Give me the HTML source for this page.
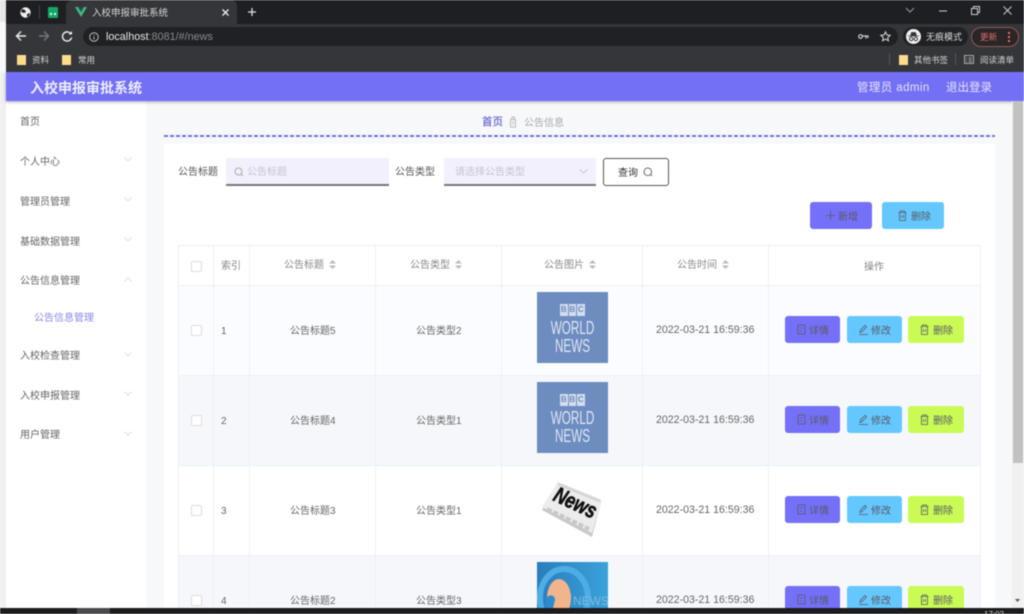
<!DOCTYPE html>
<html lang="zh"><head><meta charset="utf-8"><title>入校申报审批系统</title>
<style>
html,body{margin:0;padding:0;width:1024px;height:614px;overflow:hidden;background:#fff}
#p{position:absolute;left:0;top:0;width:1024px;height:614px;overflow:hidden;font-family:"Liberation Sans","Noto Sans CJK SC",sans-serif;filter:blur(.4px);background:#fff}
.a{position:absolute}
.t{position:absolute;white-space:nowrap;line-height:14px;font-size:10px;color:#666;margin-top:1px}
.z{margin-top:0}
.b{position:absolute;height:27px;border-radius:3px;font-size:10px;line-height:27px;color:#5a5a66;white-space:nowrap}
.b svg{position:absolute;top:8px;width:11px;height:11px;fill:none;stroke:#5a5a66;stroke-width:.8}
.b span{position:absolute;top:2px}
.p{background:#7470f8}.s{background:#64c8fe}.g{background:#c9fb54}
.l{position:absolute;background:#edf0f5}
svg{position:absolute;overflow:visible}
.w{position:absolute;left:0;width:71px;text-align:center;font-size:18px;line-height:18px;color:#dfe6f3;transform:scaleX(.65);white-space:nowrap}
.q{position:absolute;top:12px;width:7.500px;height:12px;background:#d5deee;color:#6d8cc0;font-size:8px;line-height:12px;font-weight:bold;text-align:center}
</style></head><body><div id="p">

<!-- desktop edge -->
<div class="a" style="left:0;top:0;width:6px;height:22px;background:#e6e6e6"></div>
<div class="a" style="left:0;top:22px;width:6px;height:50px;background:#f8f8f8"></div>
<div class="a" style="left:6px;top:0;right:0;height:24px;background:#1e1f23"></div>
<div class="a" style="left:66px;top:0;width:171px;height:24px;background:#35363a;border-radius:6px 6px 0 0"></div>
<div class="a" style="left:6px;top:24px;right:0;height:48px;background:#35363a"></div>

<!-- tab strip -->
<svg style="left:19px;top:6px" width="13" height="13" viewBox="0 0 13 13"><circle cx="6.500" cy="6.500" r="5.200" fill="#eee"/><path d="M3 3l3 1 1 2-2 1-3-1zM8 8l3-1-1 3-2 1z" fill="#222"/></svg>
<div class="a" style="left:39px;top:5px;width:1px;height:14px;background:#444"></div>
<div class="a" style="left:48px;top:7px;width:10px;height:11px;background:#12a866;border-radius:1px"></div>
<div class="a" style="left:50px;top:13px;width:2px;height:2px;background:#dff"></div>
<div class="a" style="left:54px;top:13px;width:2px;height:2px;background:#dff"></div>
<svg style="left:75px;top:7px" width="12" height="10" viewBox="0 0 12 10"><path d="M0 0h3l3 5 3-5h3L6 10z" fill="#3fb984"/><path d="M3 0h1.800L6 2.200 7.200 0H9L6 5z" fill="#35495e"/></svg>
<div class="t" style="left:92px;top:6px;font-size:9.500px;color:#d8d8d8">入校申报审批系统</div>
<svg style="left:222px;top:9px" width="7" height="7" viewBox="0 0 7 7"><path d="M.5.500l6 6M6.500.500l-6 6" stroke="#eee" stroke-width="1.300"/></svg>
<svg style="left:247px;top:7px" width="10" height="10" viewBox="0 0 10 10"><path d="M5 1v8M1 5h8" stroke="#ddd" stroke-width="1.300"/></svg>
<svg style="left:905px;top:7px" width="10" height="6" viewBox="0 0 10 6"><path d="M1 1l4 4 4-4" fill="none" stroke="#999"/></svg>
<svg style="left:939px;top:10px" width="8" height="2" viewBox="0 0 8 2"><path d="M0 1h8" stroke="#ccc"/></svg>
<svg style="left:971px;top:6px" width="9" height="9" viewBox="0 0 9 9"><path d="M.5 2.500h6v6h-6zM2.500 2.500v-2h6v6h-2" fill="none" stroke="#ccc"/></svg>
<svg style="left:1003px;top:6px" width="9" height="9" viewBox="0 0 9 9"><path d="M.5.500l8 8M8.500.500l-8 8" stroke="#ccc"/></svg>

<!-- toolbar -->
<svg style="left:15px;top:30px" width="12" height="12" viewBox="0 0 12 12"><path d="M11 6H2M6 1.500L1.500 6 6 10.500" fill="none" stroke="#eee" stroke-width="1.400"/></svg>
<svg style="left:38px;top:30px" width="12" height="12" viewBox="0 0 12 12"><path d="M1 6h9M6 1.500L10.500 6 6 10.500" fill="none" stroke="#777" stroke-width="1.400"/></svg>
<svg style="left:61px;top:30px" width="12" height="12" viewBox="0 0 12 12"><path d="M10 4A4.600 4.600 0 1 0 10.600 7.500" fill="none" stroke="#eee" stroke-width="1.400"/><path d="M7.500 4.500H11V1z" fill="#eee"/></svg>
<div class="a" style="left:83px;top:27px;width:815px;height:19px;background:#202124;border-radius:10px"></div>
<svg style="left:89px;top:32px" width="10" height="10" viewBox="0 0 10 10"><circle cx="5" cy="5" r="4.300" fill="none" stroke="#bbb"/><path d="M5 4.500v3M5 2.500v1" stroke="#bbb"/></svg>
<div class="t z" style="left:106px;top:30px;font-size:10.800px;color:#e8e8e8">localhost<span style="color:#8a8b8e">:8081/#/news</span></div>
<svg style="left:858px;top:33px" width="11" height="7" viewBox="0 0 11 7"><circle cx="2.500" cy="3.500" r="1.800" fill="none" stroke="#ccc" stroke-width="1.200"/><path d="M4 3h6.500M8 3v2.500M10 3v2" stroke="#ccc" stroke-width="1.200"/></svg>
<svg style="left:880px;top:31px" width="11" height="11" viewBox="0 0 11 11"><path d="M5.500.8l1.400 3.100 3.300.4-2.500 2.200.7 3.300-2.900-1.700-2.900 1.700.7-3.300L.8 4.300l3.300-.4z" fill="none" stroke="#ddd"/></svg>
<div class="a" style="left:903px;top:27px;width:65px;height:19px;background:#202124;border-radius:10px"></div>
<div class="a" style="left:906px;top:29px;width:15px;height:15px;background:#f0f0f0;border-radius:50%"></div>
<svg style="left:908px;top:32px" width="11" height="10" viewBox="0 0 11 10"><path d="M0 4h11M2.500 4l1-3.500h4l1 3.500" fill="#333" stroke="#333" stroke-width=".7"/><circle cx="3.200" cy="7" r="1.700" fill="none" stroke="#333"/><circle cx="7.800" cy="7" r="1.700" fill="none" stroke="#333"/></svg>
<div class="t z" style="left:926px;top:30px;font-size:9px;color:#ddd">无痕模式</div>
<div class="a" style="left:971px;top:27px;width:46px;height:18px;border:1px solid #8d5a58;border-radius:10px;background:#2a2526"></div>
<div class="t z" style="left:980px;top:30px;font-size:8.500px;color:#e0716c">更新</div>
<div class="a" style="left:1008px;top:32px;width:2px;height:2px;background:#e0716c;box-shadow:0 4px #e0716c,0 8px #e0716c"></div>

<!-- bookmarks -->
<div class="a" style="left:17px;top:55px;width:9px;height:10px;background:#fcdc8a"></div>
<div class="t z" style="left:32px;top:53px;font-size:8.500px;color:#d5d5d5">资料</div>
<div class="a" style="left:62px;top:55px;width:9px;height:10px;background:#fcdc8a"></div>
<div class="t z" style="left:78px;top:53px;font-size:8.500px;color:#d5d5d5">常用</div>
<div class="a" style="left:889px;top:53px;width:1px;height:12px;background:#555"></div>
<div class="a" style="left:899px;top:55px;width:9px;height:10px;background:#fcdc8a"></div>
<div class="t z" style="left:914px;top:53px;font-size:8.500px;color:#d5d5d5">其他书签</div>
<div class="a" style="left:955px;top:53px;width:1px;height:12px;background:#555"></div>
<svg style="left:964px;top:55px" width="10" height="9" viewBox="0 0 10 9"><path d="M.5.500h9v8h-9zM2 3h1M2 5h1M2 7h1M4.500 3h3.500M4.500 5h3.500M4.500 7h3.500" fill="none" stroke="#ccc" stroke-width=".8"/></svg>
<div class="t z" style="left:980px;top:53px;font-size:8.500px;color:#d5d5d5">阅读清单</div>

<!-- page bg -->
<div class="a" style="left:0;top:72px;width:1012px;height:536px;background:#f6f8fa"></div>
<div class="a" style="left:0;top:72px;width:6px;height:536px;background:#f0f0f0"></div>
<!-- sidebar -->
<div class="a" style="left:6px;top:101px;width:140px;height:507px;background:#fff"></div>
<!-- header -->
<div class="a" style="left:6px;top:72px;width:1018px;height:29px;background:#7370f6;box-shadow:0 1px 3px rgba(60,60,90,.45)"></div>
<div class="t" style="left:30px;top:79px;font-size:14px;line-height:16px;font-weight:bold;color:#eef">入校申报审批系统</div>
<div class="t" style="left:857px;top:80px;font-size:11.500px;letter-spacing:.4px;color:#e4e4fb">管理员 admin</div>
<div class="t" style="left:946px;top:80px;font-size:11.500px;color:#e4e4fb">退出登录</div>

<!-- scrollbar -->
<div class="a" style="left:1012px;top:101px;width:12px;height:507px;background:#f1f1f1"></div>
<div class="a" style="left:1013px;top:101px;width:10px;height:362px;background:#c1c1c1"></div>
<svg style="left:1015px;top:599px" width="5" height="3" viewBox="0 0 5 3"><path d="M0 0h5L2.500 3z" fill="#555"/></svg>

<!-- sidebar items -->
<div class="t" style="left:20px;top:115px">首页</div>
<div class="t" style="left:20px;top:155px">个人中心</div>
<div class="t" style="left:20px;top:195px">管理员管理</div>
<div class="t" style="left:20px;top:235px">基础数据管理</div>
<div class="t" style="left:20px;top:274px">公告信息管理</div>
<div class="t" style="left:34px;top:311px;color:#8a88e8">公告信息管理</div>
<div class="t" style="left:20px;top:349px">入校检查管理</div>
<div class="t" style="left:20px;top:389px">入校申报管理</div>
<div class="t" style="left:20px;top:428px">用户管理</div>
<svg style="left:124px;top:157px" width="8" height="5" viewBox="0 0 8 5"><path d="M.5.500L4 4 7.500.5" fill="none" stroke="#e2e2e2"/></svg>
<svg style="left:124px;top:197px" width="8" height="5" viewBox="0 0 8 5"><path d="M.5.500L4 4 7.500.5" fill="none" stroke="#e2e2e2"/></svg>
<svg style="left:124px;top:237px" width="8" height="5" viewBox="0 0 8 5"><path d="M.5.500L4 4 7.500.5" fill="none" stroke="#e2e2e2"/></svg>
<svg style="left:124px;top:277px" width="8" height="5" viewBox="0 0 8 5"><path d="M.5 4.500L4 1l3.500 3.500" fill="none" stroke="#e2e2e2"/></svg>
<svg style="left:124px;top:352px" width="8" height="5" viewBox="0 0 8 5"><path d="M.5.500L4 4 7.500.5" fill="none" stroke="#e2e2e2"/></svg>
<svg style="left:124px;top:391px" width="8" height="5" viewBox="0 0 8 5"><path d="M.5.500L4 4 7.500.5" fill="none" stroke="#e2e2e2"/></svg>
<svg style="left:124px;top:431px" width="8" height="5" viewBox="0 0 8 5"><path d="M.5.500L4 4 7.500.5" fill="none" stroke="#e2e2e2"/></svg>

<!-- breadcrumb -->
<div class="t" style="left:482px;top:114px;font-size:10.500px;color:#7d7bd8;font-weight:bold">首页</div>
<svg style="left:509px;top:116px" width="8" height="12" viewBox="0 0 8 12"><path d="M1.500 3.500h5v7.500h-5zM3 3.500V1h2.500v2.500M3 6h2M3 8h2" fill="none" stroke="#bbb"/></svg>
<div class="t" style="left:524px;top:116px;color:#aaa">公告信息</div>
<div class="a" style="left:164px;top:135px;width:831px;height:1.500px;background:repeating-linear-gradient(90deg,#7471e6 0 4px,transparent 4px 6px)"></div>

<!-- panel -->
<div class="a" style="left:164px;top:144px;width:831px;height:464px;background:#fff"></div>

<!-- search -->
<div class="t" style="left:178px;top:165px;color:#555">公告标题</div>
<div class="a" style="left:226px;top:158px;width:163px;height:26px;background:#f2f0fd;border-bottom:2px solid #777"></div>
<svg style="left:234px;top:167px" width="10" height="10" viewBox="0 0 10 10"><circle cx="4.500" cy="4.500" r="3.500" fill="none" stroke="#aaa"/><path d="M7 7l2 2" stroke="#aaa"/></svg>
<div class="t" style="left:247px;top:165px;color:#c4c4ce">公告标题</div>
<div class="t" style="left:395px;top:165px;color:#555">公告类型</div>
<div class="a" style="left:444px;top:158px;width:152px;height:26px;background:#f2f0fd;border-bottom:2px solid #777"></div>
<div class="t" style="left:455px;top:165px;color:#c4c4ce">请选择公告类型</div>
<svg style="left:579px;top:169px" width="9" height="5" viewBox="0 0 9 5"><path d="M.5.500L4.500 4l4-3.500" fill="none" stroke="#c8c8d0"/></svg>
<div class="a" style="left:603px;top:158px;width:64px;height:26px;border:1px solid #555;border-radius:3px;background:#fff"></div>
<div class="t" style="left:618px;top:166px;color:#333">查询</div>
<svg style="left:643px;top:167px" width="10" height="10" viewBox="0 0 10 10"><circle cx="4.800" cy="4.800" r="3.800" fill="none" stroke="#444" stroke-width=".8"/><path d="M7.500 7.500l1.500 1.500" stroke="#444" stroke-width=".8"/></svg>

<!-- top action buttons -->
<div class="b p" style="left:810px;top:202px;width:62px"><svg style="left:15px" viewBox="0 0 11 11"><path d="M5.500 1v9M1 5.500h9"/></svg><span style="left:28px">新增</span></div>
<div class="b s" style="left:882px;top:202px;width:62px"><svg style="left:15px" viewBox="0 0 11 11"><path d="M1.500 2.500h8M3.500 2.500V1h4v1.500M2.500 2.500v8h6v-8M4.500 5v3M6.500 5v3"/></svg><span style="left:29px">删除</span></div>

<!-- table -->
<div class="a" style="left:178px;top:285px;width:803px;height:90px;background:#fbfcff"></div>
<div class="a" style="left:178px;top:375px;width:803px;height:90px;background:#f5f7fb"></div>
<div class="a" style="left:178px;top:555px;width:803px;height:53px;background:#f5f7fb"></div>
<div class="l" style="left:178px;top:245px;width:803px;height:1px"></div>
<div class="l" style="left:178px;top:285px;width:803px;height:1px"></div>
<div class="l" style="left:178px;top:375px;width:803px;height:1px"></div>
<div class="l" style="left:178px;top:465px;width:803px;height:1px"></div>
<div class="l" style="left:178px;top:555px;width:803px;height:1px"></div>
<div class="l" style="left:178px;top:245px;width:1px;height:363px"></div>
<div class="l" style="left:213px;top:245px;width:1px;height:363px"></div>
<div class="l" style="left:249px;top:245px;width:1px;height:363px"></div>
<div class="l" style="left:375px;top:245px;width:1px;height:363px"></div>
<div class="l" style="left:501px;top:245px;width:1px;height:363px"></div>
<div class="l" style="left:642px;top:245px;width:1px;height:363px"></div>
<div class="l" style="left:768px;top:245px;width:1px;height:363px"></div>
<div class="l" style="left:980px;top:245px;width:1px;height:363px"></div>

<!-- table head -->
<div class="a" style="left:191px;top:261px;width:9px;height:9px;border:1px solid #ddd;border-radius:2px;background:#fff"></div>
<div class="t" style="left:221px;top:259px;color:#888">索引</div>
<div class="t" style="left:284px;top:258px;color:#888">公告标题</div>
<div class="t" style="left:410px;top:258px;color:#888">公告类型</div>
<div class="t" style="left:544px;top:258px;color:#888">公告图片</div>
<div class="t" style="left:677px;top:258px;color:#888">公告时间</div>
<div class="t" style="left:864px;top:260px;color:#888">操作</div>
<svg style="left:329px;top:260px" width="7" height="9" viewBox="0 0 7 9"><path d="M3.500 0L7 3.500H0zM3.500 9L0 5.500h7z" fill="#bbb"/></svg>
<svg style="left:455px;top:260px" width="7" height="9" viewBox="0 0 7 9"><path d="M3.500 0L7 3.500H0zM3.500 9L0 5.500h7z" fill="#bbb"/></svg>
<svg style="left:589px;top:260px" width="7" height="9" viewBox="0 0 7 9"><path d="M3.500 0L7 3.500H0zM3.500 9L0 5.500h7z" fill="#bbb"/></svg>
<svg style="left:722px;top:260px" width="7" height="9" viewBox="0 0 7 9"><path d="M3.500 0L7 3.500H0zM3.500 9L0 5.500h7z" fill="#bbb"/></svg>

<!-- row 1 -->
<div class="a" style="left:191px;top:325px;width:9px;height:9px;border:1px solid #ddd;border-radius:2px;background:#fff"></div>
<div class="t" style="left:221px;top:324px">1</div>
<div class="t" style="left:290px;top:324px">公告标题5</div>
<div class="t" style="left:416px;top:324px">公告类型2</div>
<div class="a" style="left:537px;top:292px;width:71px;height:71px;background:#6d8cc0;overflow:hidden">
 <div class="q" style="left:23px">B</div><div class="q" style="left:31.500px">B</div><div class="q" style="left:40px">C</div>
 <div class="w" style="top:27px">WORLD</div>
 <div class="w" style="top:45px">NEWS</div>
</div>
<div class="t z" style="left:656px;top:323px;font-size:10.600px">2022-03-21 16:59:36</div>
<div class="b p" style="left:785px;top:316px;width:55px"><svg style="left:11px" viewBox="0 0 11 11"><path d="M2 1h7v9H2zM4 4h3M4 7h2"/></svg><span style="left:24px">详情</span></div>
<div class="b s" style="left:847px;top:316px;width:55px"><svg style="left:11px" viewBox="0 0 11 11"><path d="M2 8.500l.5-2.500L7 1.500l1.500 1.500L4 7.500zM1 10.500h9"/></svg><span style="left:24px">修改</span></div>
<div class="b g" style="left:908px;top:316px;width:56px"><svg style="left:11px" viewBox="0 0 11 11"><path d="M1.500 2.500h8M3.500 2.500V1h4v1.500M2.500 2.500v8h6v-8M4.500 5v3M6.500 5v3"/></svg><span style="left:25px">删除</span></div>

<!-- row 2 -->
<div class="a" style="left:191px;top:415px;width:9px;height:9px;border:1px solid #ddd;border-radius:2px;background:#fff"></div>
<div class="t" style="left:221px;top:414px">2</div>
<div class="t" style="left:290px;top:414px">公告标题4</div>
<div class="t" style="left:416px;top:414px">公告类型1</div>
<div class="a" style="left:537px;top:382px;width:71px;height:71px;background:#6d8cc0;overflow:hidden">
 <div class="q" style="left:23px">B</div><div class="q" style="left:31.500px">B</div><div class="q" style="left:40px">C</div>
 <div class="w" style="top:27px">WORLD</div>
 <div class="w" style="top:45px">NEWS</div>
</div>
<div class="t z" style="left:656px;top:413px;font-size:10.600px">2022-03-21 16:59:36</div>
<div class="b p" style="left:785px;top:406px;width:55px"><svg style="left:11px" viewBox="0 0 11 11"><path d="M2 1h7v9H2zM4 4h3M4 7h2"/></svg><span style="left:24px">详情</span></div>
<div class="b s" style="left:847px;top:406px;width:55px"><svg style="left:11px" viewBox="0 0 11 11"><path d="M2 8.500l.5-2.500L7 1.500l1.500 1.500L4 7.500zM1 10.500h9"/></svg><span style="left:24px">修改</span></div>
<div class="b g" style="left:908px;top:406px;width:56px"><svg style="left:11px" viewBox="0 0 11 11"><path d="M1.500 2.500h8M3.500 2.500V1h4v1.500M2.500 2.500v8h6v-8M4.500 5v3M6.500 5v3"/></svg><span style="left:25px">删除</span></div>

<!-- row 3 -->
<div class="a" style="left:191px;top:505px;width:9px;height:9px;border:1px solid #ddd;border-radius:2px;background:#fff"></div>
<div class="t" style="left:221px;top:504px">3</div>
<div class="t" style="left:290px;top:504px">公告标题3</div>
<div class="t" style="left:416px;top:504px">公告类型1</div>
<svg style="left:537px;top:472px" width="71" height="71" viewBox="0 0 71 71">
 <path d="M5 38L55 65 64 31 21 12z" fill="#c9c9c9"/>
 <path d="M5 35L21 10 65 28 55 61z" fill="#ececec"/>
 <path d="M21 12L63 29" stroke="#d6d6d6" stroke-width="3"/>
 <path d="M10 37L52 57" stroke="#c8c8c8" stroke-width="4" stroke-dasharray="5 2"/>
 <text transform="translate(15 28) rotate(25) scale(.78 1)" font-family="Liberation Sans" font-weight="bold" font-style="italic" font-size="22" fill="#111" stroke="#111" stroke-width=".6">News</text>
</svg>
<div class="t z" style="left:656px;top:503px;font-size:10.600px">2022-03-21 16:59:36</div>
<div class="b p" style="left:785px;top:496px;width:55px"><svg style="left:11px" viewBox="0 0 11 11"><path d="M2 1h7v9H2zM4 4h3M4 7h2"/></svg><span style="left:24px">详情</span></div>
<div class="b s" style="left:847px;top:496px;width:55px"><svg style="left:11px" viewBox="0 0 11 11"><path d="M2 8.500l.5-2.500L7 1.500l1.500 1.500L4 7.500zM1 10.500h9"/></svg><span style="left:24px">修改</span></div>
<div class="b g" style="left:908px;top:496px;width:56px"><svg style="left:11px" viewBox="0 0 11 11"><path d="M1.500 2.500h8M3.500 2.500V1h4v1.500M2.500 2.500v8h6v-8M4.500 5v3M6.500 5v3"/></svg><span style="left:25px">删除</span></div>

<!-- row 4 -->
<div class="a" style="left:191px;top:595px;width:9px;height:9px;border:1px solid #ddd;border-radius:2px;background:#fff"></div>
<div class="t" style="left:221px;top:594px">4</div>
<div class="t" style="left:290px;top:594px">公告标题2</div>
<div class="t" style="left:416px;top:594px">公告类型3</div>
<svg style="left:537px;top:562px;overflow:hidden" width="71" height="46" viewBox="0 0 71 46">
 <defs><linearGradient id="n" x1="0" y1="0" x2="1" y2="0"><stop offset="0" stop-color="#2a7dbc"/><stop offset="1" stop-color="#3aa2da"/></linearGradient></defs>
 <rect width="71" height="46" fill="url(#n)"/>
 <ellipse cx="27" cy="36" rx="24" ry="29" fill="none" stroke="#4fade6" stroke-width="6"/>
 <ellipse cx="22" cy="36" rx="12" ry="19" fill="#f2b48a"/>
 <path d="M9 36c5-5 9-2 9 2l-2 8H9z" fill="#2f8ccc"/>
 <text x="36" y="43" font-family="Liberation Sans" font-size="12" fill="#7fb9de">NEWS</text>
</svg>
<div class="t z" style="left:656px;top:593px;font-size:10.600px">2022-03-21 16:59:36</div>
<div class="b p" style="left:785px;top:586px;width:55px"><svg style="left:11px" viewBox="0 0 11 11"><path d="M2 1h7v9H2zM4 4h3M4 7h2"/></svg><span style="left:24px">详情</span></div>
<div class="b s" style="left:847px;top:586px;width:55px"><svg style="left:11px" viewBox="0 0 11 11"><path d="M2 8.500l.5-2.500L7 1.500l1.500 1.500L4 7.500zM1 10.500h9"/></svg><span style="left:24px">修改</span></div>
<div class="b g" style="left:908px;top:586px;width:56px"><svg style="left:11px" viewBox="0 0 11 11"><path d="M1.500 2.500h8M3.500 2.500V1h4v1.500M2.500 2.500v8h6v-8M4.500 5v3M6.500 5v3"/></svg><span style="left:25px">删除</span></div>

<!-- taskbar -->
<div class="a" style="left:0;top:608px;width:1024px;height:6px;background:#1c1c1e"></div>
<div class="a" style="left:77px;top:608px;width:33px;height:6px;background:#4a4a4c"></div>
<div class="t z" style="left:984px;top:610px;font-size:8px;line-height:9px;color:#ccc">17:02</div>
</div></body></html>
